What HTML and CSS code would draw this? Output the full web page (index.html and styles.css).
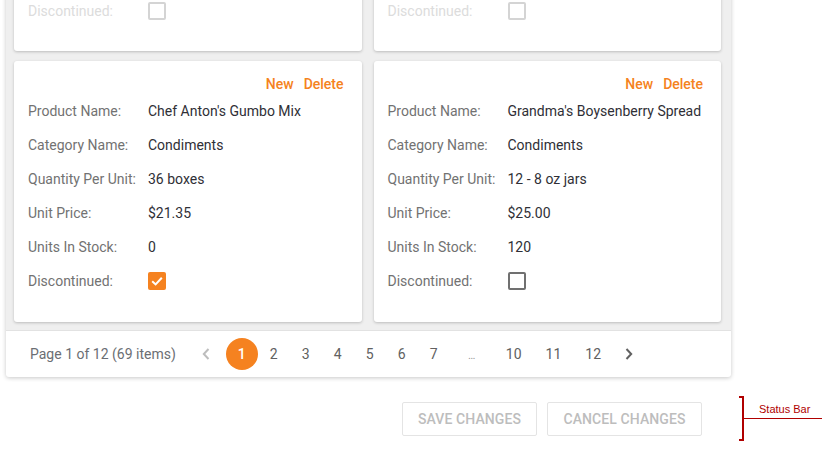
FILE: index.html
```html
<!DOCTYPE html>
<html>
<head>
<meta charset="utf-8">
<link rel="stylesheet" href="styles.css">
</head>
<body>
<div class="page">
  <div class="widget">
    <div class="cards">
      <div class="card faded">
        <div class="row"><span class="label">Discontinued:</span><span class="check"></span></div>
      </div>
      <div class="card faded">
        <div class="row"><span class="label">Discontinued:</span><span class="check"></span></div>
      </div>
      <div class="card">
        <div class="card-head"><span>New</span><span>Delete</span></div>
        <div class="row"><span class="label">Product Name:</span><span class="value">Chef Anton's Gumbo Mix</span></div>
        <div class="row"><span class="label">Category Name:</span><span class="value">Condiments</span></div>
        <div class="row"><span class="label">Quantity Per Unit:</span><span class="value">36 boxes</span></div>
        <div class="row"><span class="label">Unit Price:</span><span class="value">$21.35</span></div>
        <div class="row"><span class="label">Units In Stock:</span><span class="value">0</span></div>
        <div class="row"><span class="label">Discontinued:</span><span class="check checked"><svg viewBox="0 0 18 18" width="18" height="18"><polyline points="4.2,9.2 7.6,12.4 13.8,5.8" fill="none" stroke="#fff" stroke-width="2"/></svg></span></div>
      </div>
      <div class="card">
        <div class="card-head"><span>New</span><span>Delete</span></div>
        <div class="row"><span class="label">Product Name:</span><span class="value">Grandma's Boysenberry Spread</span></div>
        <div class="row"><span class="label">Category Name:</span><span class="value">Condiments</span></div>
        <div class="row"><span class="label">Quantity Per Unit:</span><span class="value">12 - 8 oz jars</span></div>
        <div class="row"><span class="label">Unit Price:</span><span class="value">$25.00</span></div>
        <div class="row"><span class="label">Units In Stock:</span><span class="value">120</span></div>
        <div class="row"><span class="label">Discontinued:</span><span class="check"></span></div>
      </div>
    </div>
    <div class="pager">
      <span class="info">Page 1 of 12 (69 items)</span>
      <span class="nav prev"><svg viewBox="0 0 10 14" width="10" height="14"><polyline points="7.5,2 2.8,7 7.5,12" fill="none" stroke="#bdbdbd" stroke-width="2"/></svg></span>
      <span class="pg current">1</span>
      <span class="pg">2</span>
      <span class="pg">3</span>
      <span class="pg">4</span>
      <span class="pg">5</span>
      <span class="pg">6</span>
      <span class="pg">7</span>
      <span class="pg dots">…</span>
      <span class="pg">10</span>
      <span class="pg">11</span>
      <span class="pg">12</span>
      <span class="nav next"><svg viewBox="0 0 10 14" width="10" height="14"><polyline points="2.5,2 7.2,7 2.5,12" fill="none" stroke="#616161" stroke-width="2"/></svg></span>
    </div>
  </div>
  <div class="statusbar">
    <span class="btn save">SAVE CHANGES</span>
    <span class="btn cancel">CANCEL CHANGES</span>
  </div>
  <div class="annot">
    <span class="bracket"></span>
    <span class="annot-line"></span>
    <span class="annot-text">Status Bar</span>
  </div>
</div>
</body>
</html>
```
FILE: styles.css
```css
html, body {
  margin: 0;
  padding: 0;
  background: #fff;
  overflow: hidden;
}
body {
  width: 824px;
  height: 450px;
  font-family: Roboto, "Liberation Sans", sans-serif;
  font-size: 14px;
}
.page {
  position: relative;
  display: flow-root;
  width: 824px;
  height: 450px;
  overflow: hidden;
}
.widget {
  margin: -14px 0 0 6px;
  width: 725px;
  background: #fff;
  box-shadow: 0 1px 4px rgba(0,0,0,0.22);
  border-radius: 0 0 3px 3px;
}
.cards {
  background: #efefef;
  display: grid;
  grid-template-columns: 1fr 1fr;
  column-gap: 12px;
  row-gap: 10px;
  padding: 8px 10px 8px 8px;
  border-bottom: 1px solid #e2e2e2;
}
.card {
  background: #fff;
  border-radius: 3px;
  box-shadow: 0 1px 3px rgba(0,0,0,0.22);
  padding: 12px 18px 24px 14px;
  height: 261px;
  box-sizing: border-box;
}
.card.faded {
  height: 57px;
  padding: 0 18px 23px 14px;
}
.card-head {
  height: 21px;
  display: flex;
  justify-content: flex-end;
  align-items: center;
  gap: 10px;
  color: #f58220;
  font-weight: 500;
}
.row {
  height: 34px;
  display: flex;
  align-items: center;
}
.label {
  width: 120px;
  flex: none;
  color: #727272;
}
.value {
  color: #2f2f36;
}
.check {
  width: 18px;
  height: 18px;
  box-sizing: border-box;
  border: 2px solid #707070;
  border-radius: 2px;
  display: block;
}
.check.checked {
  border: none;
  background: #f58220;
}
.check svg { display: block; }
.faded .label { color: #dcdcdc; }
.faded .check { border-color: #d4d4d4; }
.pager {
  height: 46px;
  display: flex;
  align-items: center;
  padding-left: 24px;
  color: #616161;
}
.info {
  color: #6b6e73;
  margin-right: 12px;
}
.nav {
  width: 36px;
  height: 32px;
  display: flex;
  align-items: center;
  justify-content: center;
}
.prev { margin-right: 2px; }
.next { width: 32px; }
.pg {
  min-width: 32px;
  height: 32px;
  padding: 0 12px;
  box-sizing: border-box;
  display: flex;
  align-items: center;
  justify-content: center;
  color: #616161;
}
.pg.current {
  background: #f58220;
  color: #fff;
  border-radius: 50%;
  font-weight: 500;
}
.pg.dots {
  width: 44px;
  font-size: 11px;
  color: #9a9a9a;
  padding-top: 2px;
}
.statusbar {
  display: flex;
  justify-content: flex-end;
  gap: 10px;
  width: 702px;
  margin-top: 25px;
}
.btn {
  height: 34px;
  box-sizing: border-box;
  border: 1px solid #e4e4e4;
  border-radius: 2px;
  display: flex;
  align-items: center;
  justify-content: center;
  color: #bdbdbd;
  font-weight: 500;
  font-size: 14px;
  letter-spacing: 0.1px;
}
.save { width: 135px; }
.cancel { width: 155px; }
.annot {
  position: absolute;
  left: 738px;
  top: 396px;
  width: 86px;
  height: 45px;
}
.bracket {
  position: absolute;
  left: 1px;
  top: 0;
  width: 5px;
  height: 45px;
  box-sizing: border-box;
  border: 2px solid #b00000;
  border-left: none;
}
.annot-line {
  position: absolute;
  left: 6px;
  top: 22px;
  width: 78px;
  height: 1px;
  background: #b00000;
}
.annot-text {
  position: absolute;
  left: 21px;
  top: 7px;
  font-family: "Liberation Sans", Arial, sans-serif;
  font-size: 11px;
  color: #b00000;
  line-height: 13px;
}
```
